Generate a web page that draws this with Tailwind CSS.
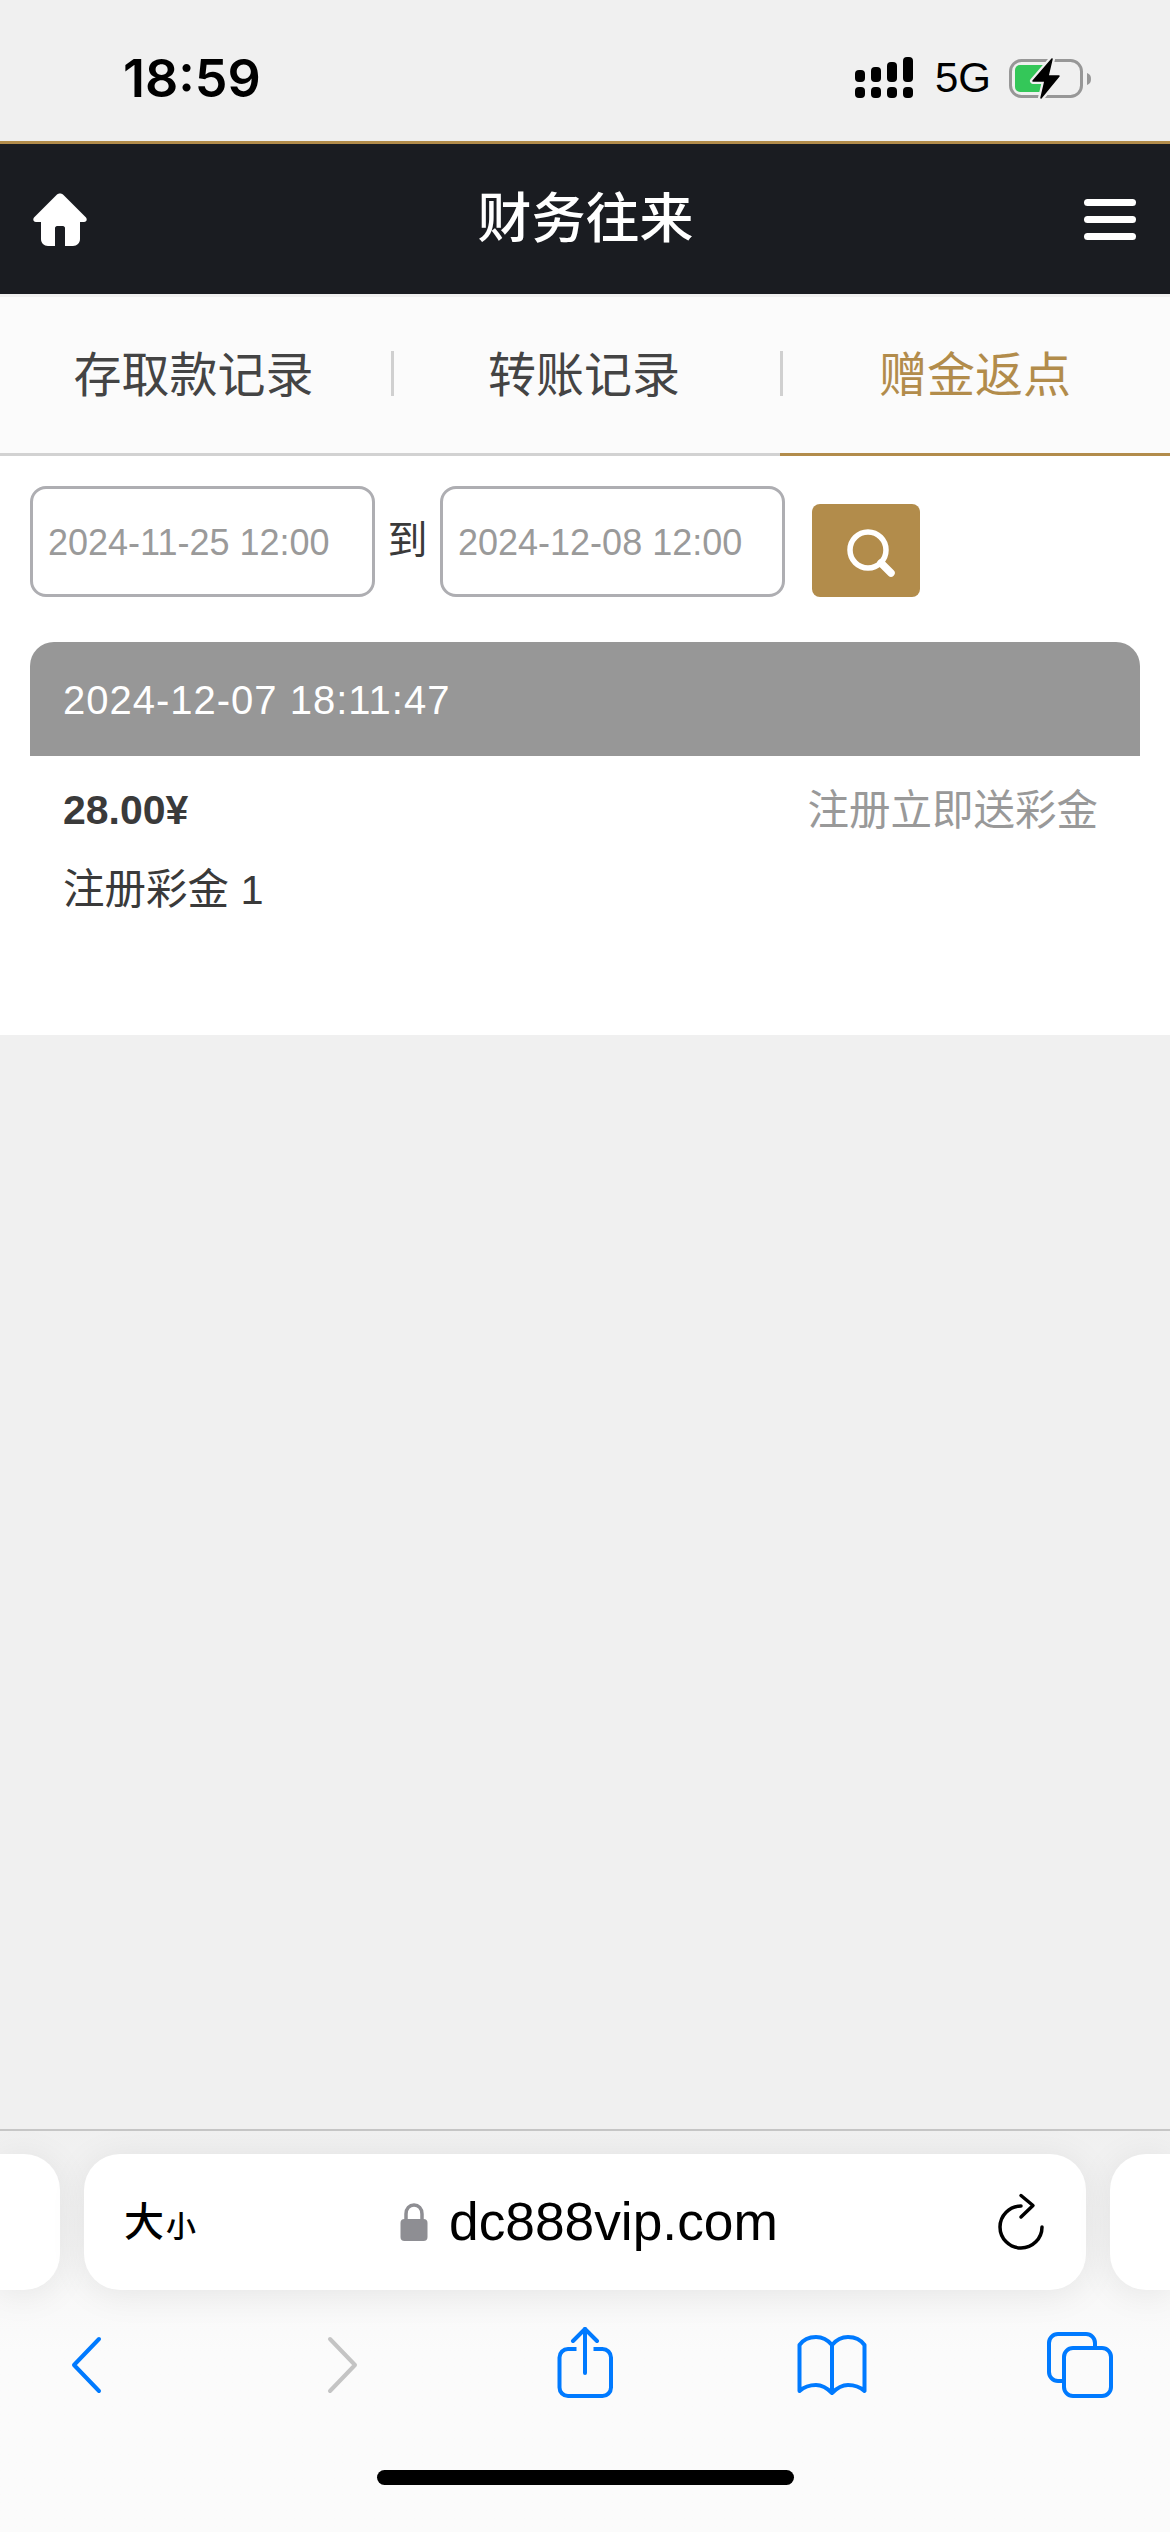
<!DOCTYPE html>
<html lang="zh-CN">
<head>
  <meta charset="UTF-8">
  <meta name="viewport" content="width=device-width, initial-scale=1.0">
  <title>财务往来</title>
  <script src="https://cdn.jsdelivr.net/npm/@tailwindcss/browser@4"></script>
</head>
<body class="bg-[#f0f0f0] [font-family:'Liberation_Sans','Noto_Sans_CJK_SC',sans-serif]">
<div class="w-[1170px] h-[2532px] flex flex-col overflow-hidden">

  <!-- Status bar -->
  <div class="h-[141px] shrink-0 pt-[57px] pl-[123px] pr-[75px] flex justify-between items-start">
    <div class="h-[42px] flex items-center pt-[2px] text-[52px] font-semibold text-black [font-family:Inter,sans-serif]">18:59</div>
    <div class="h-[42px] flex items-center">
      <svg width="60" height="42" viewBox="0 0 60 42" fill="#000">
        <rect x="1" y="13" width="10" height="12" rx="4"/><rect x="17" y="10" width="10" height="15" rx="4"/><rect x="33" y="5" width="10" height="20" rx="4"/><rect x="49" y="0" width="10" height="25" rx="4"/>
        <rect x="1" y="30" width="10" height="11" rx="4"/><rect x="17" y="30" width="10" height="11" rx="4"/><rect x="33" y="30" width="10" height="11" rx="4"/><rect x="49" y="30" width="10" height="11" rx="4"/>
      </svg>
      <span class="ml-[21px] text-[42px] leading-none text-black">5G</span>
      <svg class="ml-[14px]" width="90" height="45" viewBox="0 0 90 45">
        <rect x="5.5" y="4.5" width="71" height="36" rx="11" fill="none" stroke="#979797" stroke-width="3"/>
        <path d="M82 17 C85 18 86 20 86 23 C86 26 85 28 82 29Z" fill="#979797"/>
        <rect x="10" y="9" width="34" height="27" rx="5" fill="#34c759"/>
        <path d="M47 3 L28 25 H40 L36 42 L54 20 H43Z" fill="none" stroke="#f0f0f0" stroke-width="6" stroke-linejoin="round"/>
        <path d="M47 3 L28 25 H40 L36 42 L54 20 H43Z" fill="#000" stroke="#000" stroke-width="1.5" stroke-linejoin="round"/>
      </svg>
    </div>
  </div>

  <!-- Header -->
  <div class="h-[153px] shrink-0 border-t-[3px] border-[#b28c4b] bg-[#1a1c21] flex items-center justify-between pl-[33px] pr-[34px]">
    <svg width="54" height="53" viewBox="0 0 54 53" fill="#fff"><path d="M27 0.5 C28.5 0.5 29.5 1 30.5 2 L53 24.5 C54.5 26.5 53.5 29 51 29 H47 V46 C47 50 44 53 40 53 H32 V35 C32 34 31 33 30 33 H24 C23 33 22 34 22 35 V53 H15 C11 53 8 50 8 46 V29 H3 C0.5 29 -0.5 26.5 1 24.5 L23.5 2 C24.5 1 25.5 0.5 27 0.5Z"/></svg>
    <div class="text-[54px] font-medium text-white leading-none">财务往来</div>
    <div class="w-[52px] flex flex-col gap-[10px]">
      <div class="h-[7px] rounded-full bg-white"></div>
      <div class="h-[7px] rounded-full bg-white"></div>
      <div class="h-[7px] rounded-full bg-white"></div>
    </div>
  </div>

  <!-- Tabs -->
  <div class="mt-[3px] h-[159px] shrink-0 bg-[#fbfbfb] border-b-[3px] border-[#d2d2d2] flex text-[48px] text-[#444]">
    <div class="w-[391px] flex items-center justify-center pr-[4px] pt-[2px]">存取款记录</div>
    <div class="w-[3px] h-[45px] mt-[54px] bg-[#d0d0d0]"></div>
    <div class="w-[386px] flex items-center justify-center pr-[6px] pt-[2px]">转账记录</div>
    <div class="w-[3px] h-[45px] mt-[54px] bg-[#d0d0d0]"></div>
    <div class="flex-1 -ml-[3px] h-[159px] border-b-[3px] border-[#b28c4b] flex items-center justify-center pt-[2px] text-[#b28c4b]">赠金返点</div>
  </div>

  <!-- Filter and records -->
  <div class="h-[579px] shrink-0 bg-white pt-[30px]">
    <div class="flex items-end pl-[30px]">
      <div class="w-[345px] h-[111px] border-[3px] border-[#aeaeb2] rounded-[16px] flex items-center pl-[15px] pt-[3px] text-[36px] text-[#9a9a9a]">2024-11-25 12:00</div>
      <div class="w-[65px] h-[111px] flex items-center justify-center text-[40px] text-[#3a3a3a] pb-[3px]">到</div>
      <div class="w-[345px] h-[111px] border-[3px] border-[#aeaeb2] rounded-[16px] flex items-center pl-[15px] pt-[3px] text-[36px] text-[#9a9a9a]">2024-12-08 12:00</div>
      <div class="ml-[27px] w-[108px] h-[93px] rounded-[8px] bg-[#b28c4b] flex items-center justify-center pl-[10px] pt-[5px]">
        <svg width="48" height="48" viewBox="0 0 48 48" fill="none" stroke="#fff" stroke-linecap="round"><circle cx="21" cy="21" r="18" stroke-width="5.5"/><path d="M34 34 L44 44" stroke-width="7.5"/></svg>
      </div>
    </div>

    <div class="mt-[45px] mx-[30px] h-[114px] rounded-t-[24px] bg-[#979797] flex items-center pl-[33px] pt-[2px] text-[40px] tracking-[1px] text-white">2024-12-07 18:11:47</div>
    <div class="pt-[25px] pl-[33px] pr-[42px] mx-[30px]">
      <div class="h-[60px] flex items-center justify-between">
        <span class="text-[41px] font-bold text-[#3a3a3a]">28.00¥</span>
        <span class="text-[41.5px] text-[#999]">注册立即送彩金</span>
      </div>
      <div class="mt-[19px] h-[60px] flex items-center text-[41.5px] text-[#3a3a3a]">注册彩金 1</div>
    </div>
  </div>

  <div class="flex-1"></div>

  <!-- Safari bottom bar -->
  <div class="h-[403px] shrink-0 border-t-[2px] border-[#c6c6c6] bg-linear-to-b from-[#f0f0f0] from-0% to-[#fbfbfb] to-[55%]">
    <div class="mt-[23px] h-[136px] flex gap-[24px]">
      <div class="w-[60px] rounded-r-[36px] bg-white shadow-[0_4px_36px_rgba(0,0,0,0.08)]"></div>
      <div class="w-[1002px] rounded-[36px] bg-white shadow-[0_4px_36px_rgba(0,0,0,0.08)] flex items-center pl-[40px]">
        <span class="text-[40px] font-medium text-black leading-none">大</span><span class="text-[30px] font-medium text-black leading-none mt-[9px] ml-[2px]">小</span>
        <svg class="ml-[204px]" width="28" height="38" viewBox="0 0 28 38"><path d="M6 17 V11 C6 5.5 9.5 2 14 2 C18.5 2 22 5.5 22 11 V17" fill="none" stroke="#8e8e93" stroke-width="3.5"/><rect x="0.5" y="16" width="27" height="22" rx="4" fill="#8e8e93"/></svg>
        <span class="ml-[21px] text-[53.3px] text-black leading-none">dc888vip.com</span>
        <svg class="ml-[218px]" width="50" height="58" viewBox="0 0 50 58" fill="none" stroke="#000" stroke-width="3.5" stroke-linecap="round" stroke-linejoin="round"><path d="M25 13 A21 21 0 1 0 46 34"/><path d="M25 2.5 L37 12.5 L25 24"/></svg>
      </div>
      <div class="w-[60px] rounded-l-[36px] bg-white shadow-[0_4px_36px_rgba(0,0,0,0.08)]"></div>
    </div>

    <div class="mt-[31px] h-[88px] flex items-center">
      <svg class="ml-[70px]" width="34" height="58" viewBox="0 0 34 58" fill="none" stroke="#007aff" stroke-width="4" stroke-linecap="round" stroke-linejoin="round"><path d="M29 3 L4 29 L29 55"/></svg>
      <svg class="ml-[221px]" width="34" height="58" viewBox="0 0 34 58" fill="none" stroke="#c4c4c4" stroke-width="4" stroke-linecap="round" stroke-linejoin="round"><path d="M5 3 L30 29 L5 55"/></svg>
      <svg class="ml-[196px]" width="60" height="76" viewBox="0 0 60 76" fill="none" stroke="#007aff" stroke-width="4" stroke-linecap="round" stroke-linejoin="round"><path d="M21.5 22 H13 A8.5 8.5 0 0 0 4.5 30.5 V60.5 A8.5 8.5 0 0 0 13 69 H47.5 A8.5 8.5 0 0 0 56 60.5 V30.5 A8.5 8.5 0 0 0 47.5 22 H38.5" stroke-linecap="butt"/><path d="M30 46 V2"/><path d="M18 14 L30 2 L42 14"/></svg>
      <svg class="ml-[181px]" width="72" height="62" viewBox="0 0 72 62" fill="none" stroke="#007aff" stroke-width="4" stroke-linecap="round" stroke-linejoin="round"><path d="M36 11 C31 5 25 3 20 3 C13 3 7 6 3.5 11 V57 C8 53 13 51 20 51 C26 51 31 54 36 59 C41 54 46 51 52 51 C59 51 64 53 68.5 57 V11 C65 6 59 3 52 3 C47 3 41 5 36 11 V59"/></svg>
      <svg class="ml-[177px]" width="70" height="70" viewBox="0 0 70 70" fill="none" stroke="#007aff" stroke-width="4"><path d="M17 51 H13 A9 9 0 0 1 4 42 V13 A9 9 0 0 1 13 4 H41 A9 9 0 0 1 50 13 V16"/><rect x="19" y="18" width="47" height="48" rx="9"/></svg>
    </div>

    <div class="mt-[61px] mx-auto w-[417px] h-[15px] rounded-full bg-black"></div>
  </div>
</div>
</body>
</html>
